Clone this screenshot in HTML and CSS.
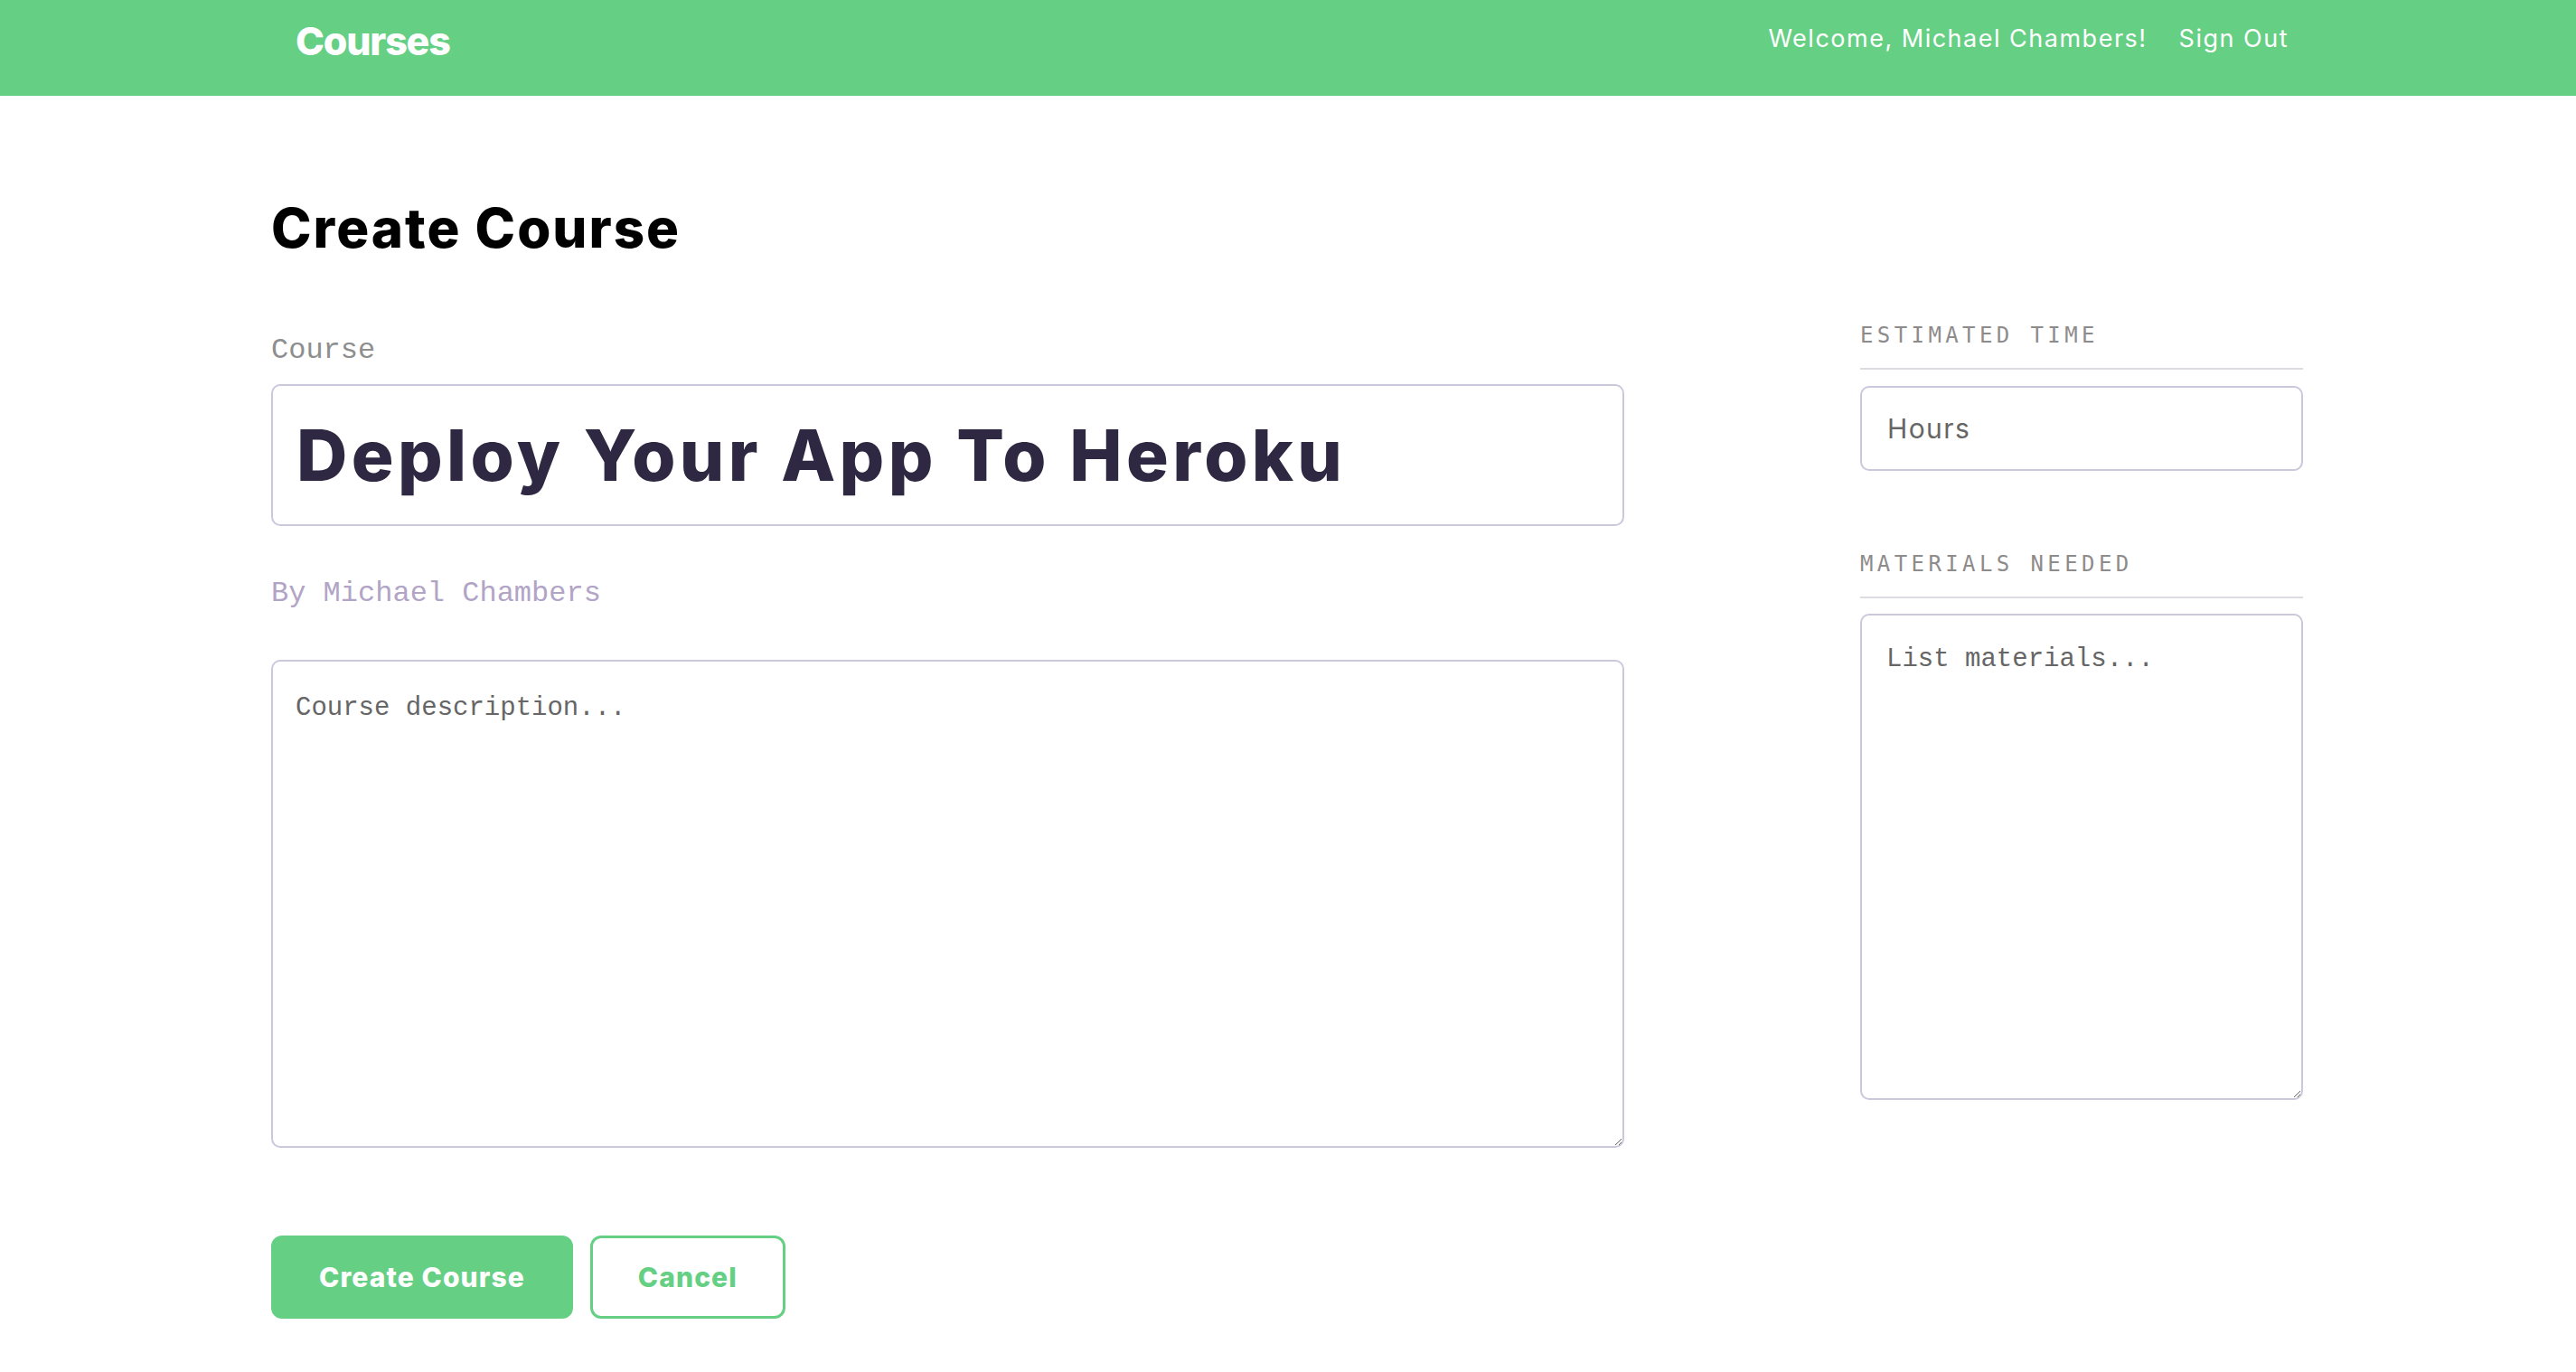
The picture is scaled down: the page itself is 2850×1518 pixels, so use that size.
FILE: index.html
```html
<!DOCTYPE html>
<html lang="en">
<head>
<meta charset="utf-8">
<title>Courses - Create Course</title>
<link rel="stylesheet" href="styles.css">
</head>
<body>
<header class="header">
  <div class="header-inner">
    <h1 class="brand">Courses</h1>
    <nav class="nav">
      <span class="welcome">Welcome, Michael Chambers!</span>
      <a class="signout" href="#">Sign Out</a>
    </nav>
  </div>
</header>
<main class="main">
  <h2 class="page-title">Create Course</h2>
  <form class="course-form">
    <div class="col-main">
      <label class="field-label">Course</label>
      <div class="title-input">Deploy Your App To Heroku</div>
      <p class="byline">By Michael Chambers</p>
      <textarea class="desc">Course description...</textarea>
      <div class="actions">
        <button class="btn btn-primary" type="button">Create Course</button>
        <button class="btn btn-secondary" type="button">Cancel</button>
      </div>
    </div>
    <aside class="col-side">
      <h4 class="side-label">ESTIMATED TIME</h4>
      <div class="hours-input">Hours</div>
      <h4 class="side-label side-label-second">MATERIALS NEEDED</h4>
      <textarea class="materials">List materials...</textarea>
    </aside>
  </form>
</main>
</body>
</html>
```
FILE: styles.css
```css
html, body {
  margin: 0;
  padding: 0;
  background: #ffffff;
}
body {
  font-family: Inter, "Liberation Sans", Arial, sans-serif;
  color: #000;
}
.header {
  background: #65cf84;
  height: 106px;
}
.header-inner {
  width: 2250px;
  margin: 0 auto;
  box-sizing: border-box;
  padding: 0 18px 0 27px;
  display: flex;
  justify-content: space-between;
  align-items: flex-start;
}
.brand {
  margin: 0;
  padding-top: 24px;
  font-size: 43px;
  line-height: 43px;
  font-weight: 800;
  letter-spacing: -1.2px;
  color: #fff;
}
.nav {
  padding-top: 29px;
  display: flex;
  gap: 35px;
  font-size: 27px;
  line-height: 27px;
  letter-spacing: 1.5px;
  color: #fff;
}
.signout {
  color: #fff;
  text-decoration: none;
}
.main {
  width: 2250px;
  margin: 0 auto;
}
.page-title {
  margin: 116px 0 77px;
  font-size: 60px;
  line-height: 60px;
  font-weight: 800;
  letter-spacing: 2px;
  color: #000;
}
.course-form {
  display: grid;
  grid-template-columns: 1497px 490px;
  column-gap: 261px;
  align-items: start;
}
.col-main {
  padding-top: 13px;
}
.field-label {
  display: block;
  font-family: "Liberation Mono", "Courier New", monospace;
  font-size: 32px;
  line-height: 32px;
  color: #8e8e8e;
}
.title-input {
  margin-top: 21px;
  height: 157px;
  box-sizing: border-box;
  border: 2px solid #cdc7db;
  border-radius: 10px;
  padding: 0 26px;
  display: flex;
  align-items: center;
  font-size: 78px;
  font-weight: 800;
  letter-spacing: 4.35px;
  color: #2f2842;
  white-space: nowrap;
}
.byline {
  margin: 59px 0 0;
  font-family: "Liberation Mono", "Courier New", monospace;
  font-size: 32px;
  line-height: 32px;
  color: #b1a4c6;
}
.desc, .materials {
  display: block;
  width: 100%;
  height: 538px;
  box-sizing: border-box;
  border: 2px solid #cdc7db;
  border-radius: 10px;
  padding: 33px 25px 30px;
  font-family: "Liberation Mono", "Courier New", monospace;
  font-size: 29px;
  line-height: 1.3;
  color: #666;
  background: #fff;
  outline: none;
  resize: vertical;
}
.desc {
  margin-top: 57px;
  height: 540px;
}
.actions {
  margin-top: 97px;
  display: flex;
  gap: 19px;
}
.btn {
  height: 92px;
  box-sizing: border-box;
  padding: 0 50px;
  border: 3px solid #65cf84;
  border-radius: 12px;
  font-family: Inter, "Liberation Sans", Arial, sans-serif;
  font-size: 30px;
  font-weight: 800;
  letter-spacing: 1.1px;
  cursor: pointer;
}
.btn-primary {
  background: #65cf84;
  color: #fff;
}
.btn-secondary {
  background: #fff;
  color: #65cf84;
}
.side-label {
  margin: 0;
  padding-bottom: 24px;
  border-bottom: 2px solid #dedbe3;
  font-family: "DejaVu Sans Mono", "Liberation Mono", monospace;
  font-size: 24px;
  line-height: 24px;
  font-weight: 400;
  letter-spacing: 4.4px;
  color: #8e8b8b;
}
.side-label-second {
  margin-top: 91px;
}
.hours-input {
  margin-top: 18px;
  height: 94px;
  box-sizing: border-box;
  border: 2px solid #cdc7db;
  border-radius: 10px;
  padding: 0 28px;
  display: flex;
  align-items: center;
  font-size: 30px;
  letter-spacing: 1.4px;
  color: #666;
}
.materials {
  margin-top: 17px;
  padding: 30px 27px;
}
```
